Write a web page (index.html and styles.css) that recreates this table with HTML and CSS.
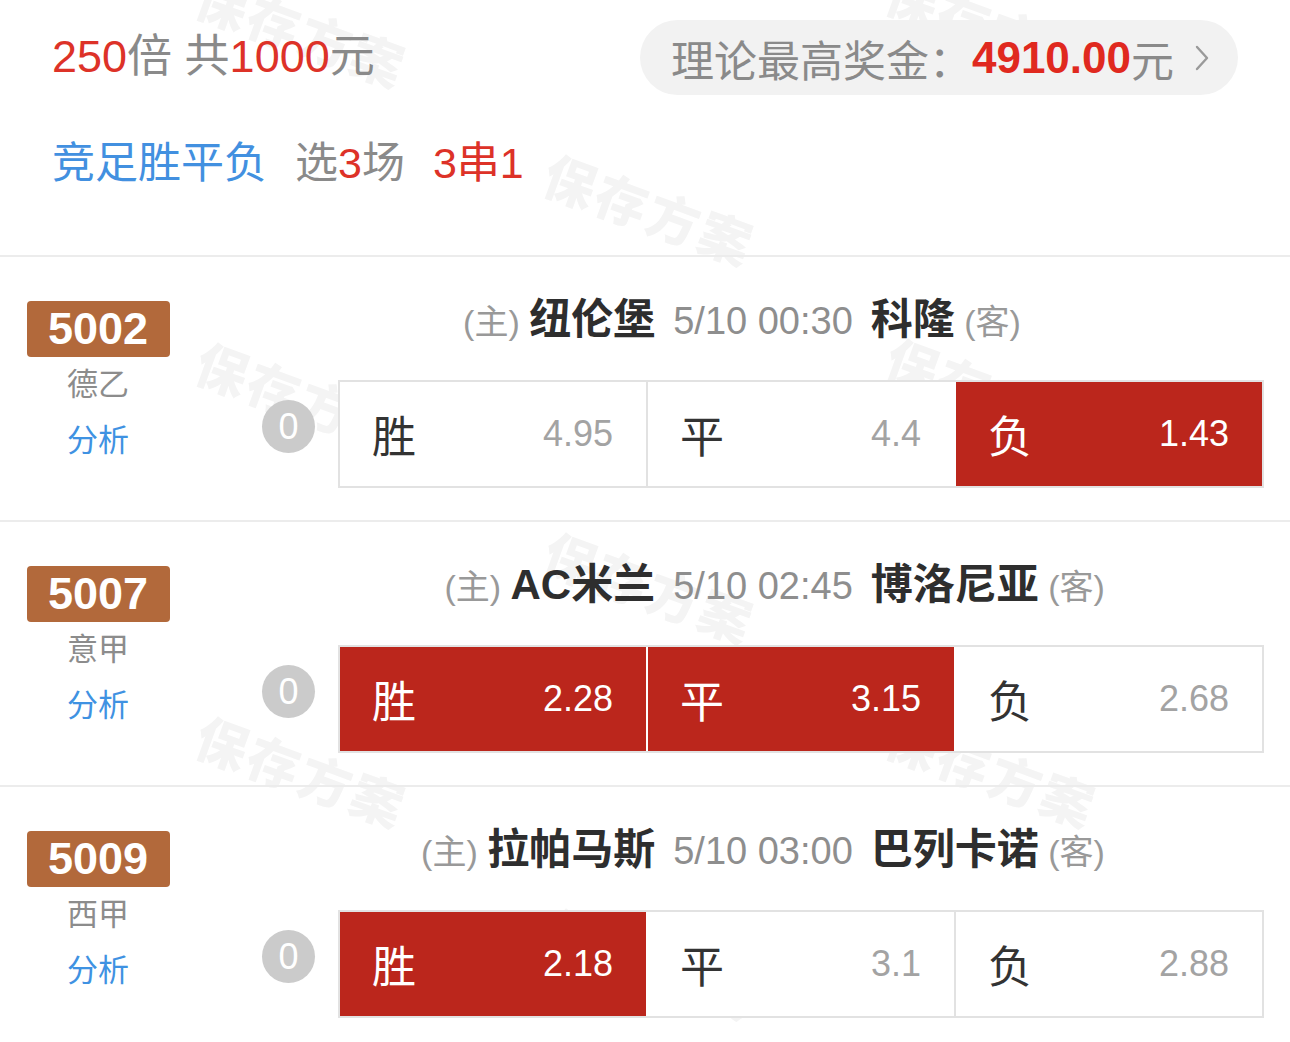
FILE: index.html
```html
<!DOCTYPE html>
<html>
<head>
  <title>方案详情</title>
  <link rel="stylesheet" href="styles.css">
</head>
<body>
  <div class="page">
    <!-- watermark layer -->
    <div class="wm-layer">
      <span class="wm wm-a1">保存方案</span>
      <span class="wm wm-a2">保存方案</span>
      <span class="wm wm-b1">保存方案</span>
      <span class="wm wm-c1">保存方案</span>
      <span class="wm wm-c2">保存方案</span>
      <span class="wm wm-d1">保存方案</span>
      <span class="wm wm-e1">保存方案</span>
      <span class="wm wm-e2">保存方案</span>
      <span class="wm wm-f1">保存方案</span>
    </div>

    <div class="summary">
      <div class="summary-top">
        <div class="stake"><span class="red">250</span>倍 共<span class="red">1000</span>元</div>
        <div class="prize">
          理论最高奖金：<b class="prize-num">4910.00</b>元
          <svg class="chevron" width="16" height="28" viewBox="0 0 16 28">
            <polyline points="3,3 13,14 3,25" fill="none" stroke="#9a9a9a" stroke-width="2.4" stroke-linecap="round" stroke-linejoin="round"/>
          </svg>
        </div>
      </div>
      <div class="summary-play">
        <span class="blue">竞足胜平负</span>
        <span>选<span class="red">3</span>场</span>
        <span class="red">3串1</span>
      </div>
    </div>

    <div class="match">
      <div class="match-side">
        <div class="match-no">5002</div>
        <div class="league">德乙</div>
        <div class="analysis">分析</div>
      </div>
      <div class="match-main">
        <div class="teams">
          <div class="home"><span class="tag">(主)</span> <b>纽伦堡</b></div>
          <div class="time">5/10 00:30</div>
          <div class="away"><b>科隆</b> <span class="tag">(客)</span></div>
        </div>
        <div class="odds-row">
          <span class="handicap">0</span>
          <div class="odds">
            <div class="cell"><span class="pick">胜</span><span class="rate">4.95</span></div>
            <div class="cell"><span class="pick">平</span><span class="rate">4.4</span></div>
            <div class="cell on"><span class="pick">负</span><span class="rate">1.43</span></div>
          </div>
        </div>
      </div>
    </div>

    <div class="match">
      <div class="match-side">
        <div class="match-no">5007</div>
        <div class="league">意甲</div>
        <div class="analysis">分析</div>
      </div>
      <div class="match-main">
        <div class="teams">
          <div class="home"><span class="tag">(主)</span> <b>AC米兰</b></div>
          <div class="time">5/10 02:45</div>
          <div class="away"><b>博洛尼亚</b> <span class="tag">(客)</span></div>
        </div>
        <div class="odds-row">
          <span class="handicap">0</span>
          <div class="odds">
            <div class="cell on"><span class="pick">胜</span><span class="rate">2.28</span></div>
            <div class="cell on"><span class="pick">平</span><span class="rate">3.15</span></div>
            <div class="cell"><span class="pick">负</span><span class="rate">2.68</span></div>
          </div>
        </div>
      </div>
    </div>

    <div class="match">
      <div class="match-side">
        <div class="match-no">5009</div>
        <div class="league">西甲</div>
        <div class="analysis">分析</div>
      </div>
      <div class="match-main">
        <div class="teams">
          <div class="home"><span class="tag">(主)</span> <b>拉帕马斯</b></div>
          <div class="time">5/10 03:00</div>
          <div class="away"><b>巴列卡诺</b> <span class="tag">(客)</span></div>
        </div>
        <div class="odds-row">
          <span class="handicap">0</span>
          <div class="odds">
            <div class="cell on"><span class="pick">胜</span><span class="rate">2.18</span></div>
            <div class="cell"><span class="pick">平</span><span class="rate">3.1</span></div>
            <div class="cell"><span class="pick">负</span><span class="rate">2.88</span></div>
          </div>
        </div>
      </div>
    </div>
  </div>
</body>
</html>
```

FILE: styles.css
```css
body {
  margin: 0;
  background-color: #fff;
  font-family: "Liberation Sans", "Noto Sans CJK SC", sans-serif;
  color: #333;
}

.page {
  position: relative;
  width: 1290px;
  height: 1042px;
  overflow: hidden;
}

.red {
  color: #dd3228;
}

.blue {
  color: #4290e0;
}

/* watermark */
.wm-layer {
  position: absolute;
  top: 0;
  left: 0;
  right: 0;
  bottom: 0;
  z-index: 0;
  pointer-events: none;
}

.wm {
  position: absolute;
  font-family: "Noto Sans CJK SC", sans-serif;
  font-weight: 900;
  font-size: 52px;
  letter-spacing: 3px;
  color: #f4f4f4;
  white-space: nowrap;
  transform: translate(-50%, -50%) rotate(20deg);
}

.wm-a1 { left: 302px; top: 30px; }
.wm-a2 { left: 992px; top: 26px; }
.wm-b1 { left: 650px; top: 208px; }
.wm-c1 { left: 302px; top: 396px; }
.wm-c2 { left: 992px; top: 392px; }
.wm-d1 { left: 650px; top: 586px; }
.wm-e1 { left: 302px; top: 770px; }
.wm-e2 { left: 992px; top: 770px; }
.wm-f1 { left: 650px; top: 962px; }

/* summary */
.summary {
  position: relative;
  z-index: 1;
  padding: 20px 52px 67px;
  border-bottom: 2px solid #ececec;
}

.summary-top {
  display: flex;
  justify-content: space-between;
  align-items: center;
  height: 75px;
}

.stake {
  font-size: 45px;
  color: #8a8a8a;
  padding-bottom: 10px;
}

.prize {
  display: flex;
  align-items: center;
  height: 75px;
  padding: 0 28px 0 31px;
  background-color: #f2f2f2;
  border-radius: 38px;
  font-size: 43px;
  color: #8a8a8a;
}

.prize-num {
  color: #e0291f;
  font-size: 44px;
  font-weight: bold;
}

.chevron {
  margin-left: 20px;
}

.summary-play {
  display: flex;
  gap: 28px;
  margin-top: 43px;
  height: 50px;
  line-height: 50px;
  font-size: 43px;
  color: #8a8a8a;
}

/* match rows */
.match {
  position: relative;
  z-index: 1;
  display: flex;
  padding: 44px 0 32px;
  border-bottom: 2px solid #ececec;
}

.match-side {
  width: 196px;
  display: flex;
  flex-direction: column;
  align-items: center;
}

.match-no {
  width: 143px;
  height: 56px;
  line-height: 56px;
  text-align: center;
  background-color: #b2693b;
  border-radius: 4px;
  color: #fff;
  font-size: 45px;
  font-weight: bold;
}

.league,
.analysis {
  height: 56px;
  line-height: 56px;
  font-size: 31px;
}

.league {
  color: #8c8c8c;
}

.analysis {
  color: #3f92e2;
}

.match-main {
  flex: 1;
  padding: 0 26px 0 66px;
}

.teams {
  display: grid;
  grid-template-columns: 1fr auto 1fr;
  column-gap: 18px;
  align-items: baseline;
  height: 38px;
  line-height: 38px;
  margin-bottom: 41px;
  font-size: 34px;
  white-space: nowrap;
}

.home {
  text-align: right;
}

.away {
  text-align: left;
}

.teams b {
  font-size: 42px;
  color: #2e2e2e;
}

.tag {
  font-size: 34px;
  color: #999;
}

.time {
  font-size: 38px;
  color: #8e8e8e;
}

.odds-row {
  display: flex;
  align-items: flex-start;
  gap: 23px;
}

.handicap {
  flex: 0 0 53px;
  height: 53px;
  line-height: 53px;
  margin-top: 20px;
  border-radius: 50%;
  background-color: #cbcbcb;
  color: #fff;
  text-align: center;
  font-size: 36px;
}

.odds {
  flex: 1;
  display: grid;
  grid-template-columns: 1fr 1fr 1fr;
  gap: 2px;
  height: 104px;
  border: 2px solid #e2e2e2;
  background-color: #e2e2e2;
}

.cell {
  display: flex;
  justify-content: space-between;
  align-items: center;
  padding: 0 33px 0 32px;
  background-color: #fff;
}

.cell.on {
  background-color: #bb261c;
}

.cell + .cell.on,
.cell.on + .cell {
  box-shadow: -2px 0 0 #fff;
}

.pick {
  font-size: 44px;
  color: #333;
}

.rate {
  font-size: 36px;
  color: #a3a3a3;
}

.cell.on .pick,
.cell.on .rate {
  color: #fff;
}
```
